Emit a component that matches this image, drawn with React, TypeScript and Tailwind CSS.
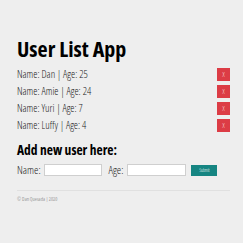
import React from "react";

const users = [
  { name: "Dan", age: 25 },
  { name: "Amie", age: 24 },
  { name: "Yuri", age: 7 },
  { name: "Luffy", age: 4 },
];

export default function App() {
  return (
    <div
      className="w-[243px] h-[243px] bg-[#eeeeee] text-[#222] overflow-hidden"
      style={{ fontFamily: '"Open Sans", "DejaVu Sans Condensed", sans-serif', fontStretch: "75%" }}
    >
      <div className="pl-[17px] pr-[13px] pt-[35px]">
        <h1 className="text-[22px] leading-[26px] font-bold text-black">User List App</h1>
        <ul className="mt-[5px] flex flex-col">
          {users.map((u) => (
            <li key={u.name} className="flex items-center justify-between h-[17px] text-[10.5px] font-light">
              <span>Name: {u.name} | Age: {u.age}</span>
              <button className="w-[13px] h-[13px] bg-[#dc3c45] text-[#f6d0d2] text-[7px] leading-[13px] text-center">X</button>
            </li>
          ))}
        </ul>
        <h2 className="mt-[7px] text-[13.5px] leading-[18px] font-bold text-black">Add new user here:</h2>
        <form className="mt-[3px] flex items-center text-[11px] font-light">
          <span>Name:</span>
          <input className="ml-[3px] w-[58px] h-[12px] bg-white border border-[#cfcfcf]" />
          <span className="ml-[7px]">Age:</span>
          <input className="ml-[4px] w-[59px] h-[12px] bg-white border border-[#cfcfcf]" />
          <button type="button" className="ml-[5px] w-[26px] h-[11px] bg-[#168582] text-white text-[4.5px] leading-[11px]">Submit</button>
        </form>
        <div className="mt-[11px] border-t border-[#e0e0e0]" />
        <div className="mt-[5px] text-[5px] text-[#999]">© Dan Quesada | 2020</div>
      </div>
    </div>
  );
}
